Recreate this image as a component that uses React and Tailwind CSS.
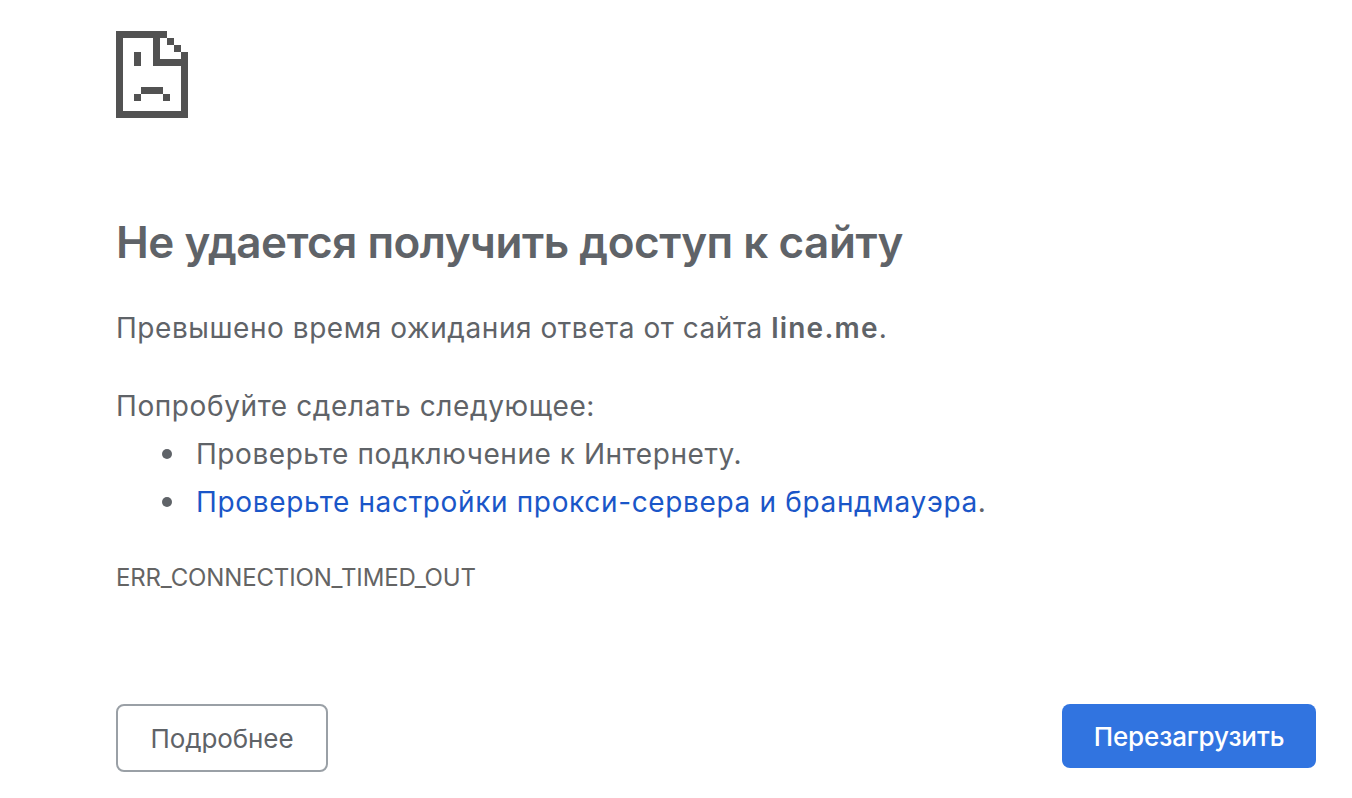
function SadTab() {
  return (
    <svg width="72" height="87" viewBox="0 0 72 87" shapeRendering="crispEdges" fill="#525252" className="block">
      {/* outline */}
      <path d="M0 0H51V7H7V80H65V21H72V87H0Z" />
      {/* folded corner */}
      <path d="M37 7H44V28H65V35H37Z" />
      <rect x="51" y="7" width="7" height="7" />
      <rect x="58" y="14" width="7" height="7" />
      {/* eye */}
      <rect x="18" y="21" width="7" height="14" />
      {/* mouth */}
      <rect x="25" y="56" width="22" height="7" />
      <rect x="18" y="63" width="7" height="7" />
      <rect x="47" y="63" width="7" height="7" />
    </svg>
  );
}

export default function App() {
  return (
    <div className="h-[798px] overflow-hidden bg-white pt-[31px] pl-[116px] pr-[36px] flex flex-col font-['Inter',sans-serif] text-[#5f6368]">
      <SadTab />

      <h1 className="mt-[96px] text-[44px] leading-[56px] font-semibold tracking-[-0.47px]">
        Не удается получить доступ к сайту
      </h1>

      <p className="mt-[34px] text-[28px] leading-[48px] tracking-[0.55px]">
        Превышено время ожидания ответа от сайта <b className="font-semibold tracking-[1.2px]">line.me</b>.
      </p>

      <p className="mt-[30px] text-[28px] leading-[48px] tracking-[0.6px]">Попробуйте сделать следующее:</p>
      <ul className="text-[28px] leading-[48px] tracking-[0.55px]">
        <li className="flex items-center">
          <span className="ml-[46px] mr-[24px] w-[10px] h-[10px] rounded-full bg-[#5f6368]"></span>
          Проверьте подключение к Интернету.
        </li>
        <li className="flex items-center">
          <span className="ml-[46px] mr-[24px] w-[10px] h-[10px] rounded-full bg-[#5f6368]"></span>
          <span className="tracking-[0.65px]">
            <a href="#" className="text-[#1a56c8]">Проверьте настройки прокси-сервера и брандмауэра</a>.
          </span>
        </li>
      </ul>

      <div className="mt-[36px] text-[24px] leading-[32px] tracking-[-0.15px] text-[#646464]">ERR_CONNECTION_TIMED_OUT</div>

      <div className="mt-[110px] flex justify-between items-start">
        <button className="w-[212px] h-[68px] rounded-[8px] border-2 border-[#9aa0a6] bg-white text-[26px] tracking-[-0.1px] text-[#5f6368]">
          Подробнее
        </button>
        <button className="w-[254px] h-[64px] rounded-[8px] bg-[#3174e0] text-[26px] tracking-[-0.1px] font-medium text-white">
          Перезагрузить
        </button>
      </div>
    </div>
  );
}
